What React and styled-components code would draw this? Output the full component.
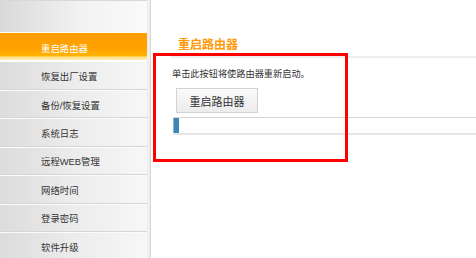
import React from "react";
import styled, { createGlobalStyle } from "styled-components";

const Global = createGlobalStyle`
  html, body { margin: 0; padding: 0; background: #fff; }
  body { font-family: "Liberation Sans", "Noto Sans CJK SC", sans-serif; overflow: hidden; }
  * { box-sizing: border-box; }
`;

const Page = styled.div`
  position: relative;
  display: flex;
  width: 476px;
  height: 258px;
  overflow: hidden;
`;

const Sidebar = styled.div`
  width: 147px;
  flex: none;
  display: flex;
  flex-direction: column;
`;

const SideHeader = styled.div`
  height: 33px;
  flex: none;
  border-top: 1px solid #d8d8d8;
  border-bottom: 1px solid #fafafa;
  background: linear-gradient(to right, #d9d9d9, #f2f2f2 55%, #fafafa);
`;

const Item = styled.div`
  height: 28.45px;
  flex: none;
  display: flex;
  align-items: center;
  padding: 1px 0 0 41px;
  font-size: 9.4px;
  color: ${(p) => (p.$active ? "#ffffff" : "#333333")};
  border-top: 1px solid ${(p) => (p.$active ? "#ffa400" : "#fbfbfb")};
  border-bottom: 1px solid ${(p) => (p.$active ? "#fff" : "#d6d6d6")};
  background: ${(p) =>
    p.$active
      ? "linear-gradient(to bottom, #ff9d00 0%, #ffa300 60%, #ffb400 84%, #ffdf80 88%, #ffeeb8 100%)"
      : "linear-gradient(to right, #dcdcdc, #ececec 50%, #f7f7f7)"};
`;

const Divider = styled.div`
  width: 4px;
  flex: none;
  background: #efefef;
  border-right: 1px solid #d6d6d6;
`;

const Main = styled.div`
  flex: 1;
  display: flex;
  flex-direction: column;
  align-items: flex-start;
`;

const Title = styled.div`
  margin: 37px 0 0 27px;
  font-size: 12px;
  line-height: 16px;
  font-weight: bold;
  color: #ff9a0a;
`;

const TitleRule = styled.div`
  align-self: stretch;
  height: 2px;
  margin: 3px 0 0 20px;
  background: #eeeeee;
`;

const Desc = styled.div`
  margin: 10px 0 0 21px;
  font-size: 9.2px;
  line-height: 12px;
  color: #333;
`;

const Button = styled.button`
  margin: 8px 0 0 25px;
  width: 82px;
  height: 25px;
  padding: 0;
  border: 1px solid #d2d2d2;
  background: linear-gradient(to bottom, #fafafa, #ececec);
  font-family: inherit;
  font-size: 11px;
  color: #333;
`;

const Progress = styled.div`
  align-self: stretch;
  margin: 4px 0 0 22px;
  height: 18px;
  border-top: 1px solid #d4d4d4;
  border-bottom: 2px solid #e6e6e6;
  display: flex;
`;

const ProgressFill = styled.div`
  height: 100%;
  background: #3a88b3;
  border-left: 1px solid #8fb4d0;
`;

const Highlight = styled.div`
  position: absolute;
  left: 153px;
  top: 53px;
  width: 195px;
  height: 109px;
  border: 3px solid #ff0000;
  pointer-events: none;
`;

const items = ["重启路由器", "恢复出厂设置", "备份/恢复设置", "系统日志", "远程WEB管理", "网络时间", "登录密码", "软件升级"];

export default function App() {
  return (
    <Page>
      <Global />
      <Sidebar>
        <SideHeader />
        {items.map((t, i) => (
          <Item key={t} $active={i === 0}>{t}</Item>
        ))}
      </Sidebar>
      <Divider />
      <Main>
        <Title>重启路由器</Title>
        <TitleRule />
        <Desc>单击此按钮将使路由器重新启动。</Desc>
        <Button>重启路由器</Button>
        <Progress>
          <ProgressFill style={{ width: "6px" }} />
        </Progress>
      </Main>
      <Highlight />
    </Page>
  );
}
